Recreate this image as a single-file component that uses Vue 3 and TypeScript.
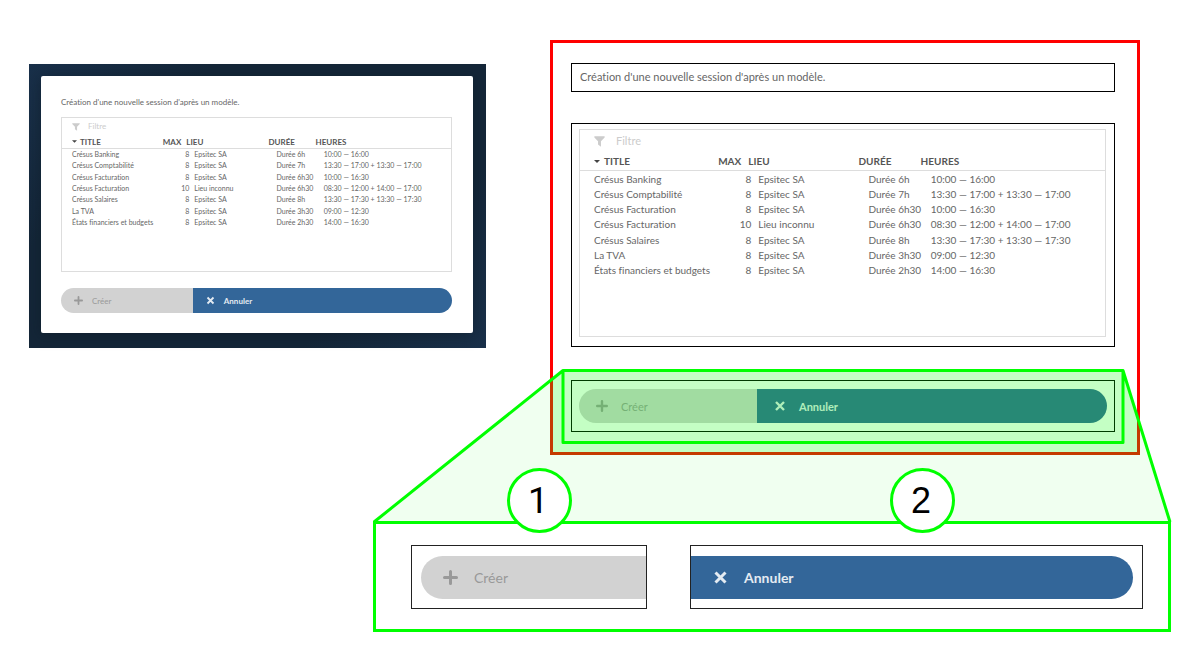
<script setup lang="ts">
interface Session {
  title: string
  max: number
  place: string
  duration: string
  hours: string
}

const variants = ['compact', 'outlined'] as const

const sessions: Session[] = [
  { title: 'Crésus Banking', max: 8, place: 'Epsitec SA', duration: 'Durée 6h', hours: '10:00 — 16:00' },
  { title: 'Crésus Comptabilité', max: 8, place: 'Epsitec SA', duration: 'Durée 7h', hours: '13:30 — 17:00 + 13:30 — 17:00' },
  { title: 'Crésus Facturation', max: 8, place: 'Epsitec SA', duration: 'Durée 6h30', hours: '10:00 — 16:30' },
  { title: 'Crésus Facturation', max: 10, place: 'Lieu inconnu', duration: 'Durée 6h30', hours: '08:30 — 12:00 + 14:00 — 17:00' },
  { title: 'Crésus Salaires', max: 8, place: 'Epsitec SA', duration: 'Durée 8h', hours: '13:30 — 17:30 + 13:30 — 17:30' },
  { title: 'La TVA', max: 8, place: 'Epsitec SA', duration: 'Durée 3h30', hours: '09:00 — 12:30' },
  { title: 'États financiers et budgets', max: 8, place: 'Epsitec SA', duration: 'Durée 2h30', hours: '14:00 — 16:30' },
]

const plusPath = 'M6 1.2V10.8M1.2 6H10.8'
const crossPath = 'M2 2L10 10M10 2L2 10'
</script>

<template>
  <main class="page">
    <div class="dialogs">
      <div v-for="variant in variants" :key="variant" class="stage" :class="variant">
        <div class="dialog">
          <p class="message">Création d'une nouvelle session d'après un modèle.</p>
          <section class="list-area">
            <div class="list">
              <label class="filter">
                <svg class="funnel" viewBox="0 0 12 12" aria-hidden="true">
                  <path d="M0.4 0.4H11.6V1.5L7.6 5.8V11.8L4.4 9.4V5.8L0.4 1.5Z" />
                </svg>
                <input type="text" placeholder="Filtre" aria-label="Filtre" />
              </label>
              <table>
                <thead>
                  <tr>
                    <th class="sorted">
                      <svg class="arrow" viewBox="0 0 6 3" aria-hidden="true"><path d="M0 0H6L3 3Z" /></svg>TITLE
                    </th>
                    <th class="num">MAX</th>
                    <th>LIEU</th>
                    <th>DURÉE</th>
                    <th>HEURES</th>
                  </tr>
                </thead>
                <tbody>
                  <tr v-for="(session, i) in sessions" :key="i">
                    <td>{{ session.title }}</td>
                    <td class="num">{{ session.max }}</td>
                    <td>{{ session.place }}</td>
                    <td>{{ session.duration }}</td>
                    <td>{{ session.hours }}</td>
                  </tr>
                </tbody>
              </table>
            </div>
          </section>
          <section class="actions">
            <button type="button" class="action create" disabled>
              <svg viewBox="0 0 12 12" aria-hidden="true"><path :d="plusPath" /></svg>Créer
            </button>
            <button type="button" class="action cancel">
              <svg viewBox="0 0 12 12" aria-hidden="true"><path :d="crossPath" /></svg>Annuler
            </button>
          </section>
        </div>
      </div>
    </div>

    <div class="detail-row">
      <section class="detail">
        <div class="part part-create">
          <button type="button" class="action create" disabled>
            <svg viewBox="0 0 12 12" aria-hidden="true"><path :d="plusPath" /></svg>Créer
          </button>
        </div>
        <div class="part part-cancel">
          <button type="button" class="action cancel">
            <svg viewBox="0 0 12 12" aria-hidden="true"><path :d="crossPath" /></svg>Annuler
          </button>
        </div>
      </section>
    </div>

    <svg class="callout" viewBox="0 0 1200 669" preserveAspectRatio="none" aria-hidden="true">
      <path class="tint" d="M550 380.5L563 370H1123L1140 424V455H550Z" />
      <path class="tint-light" d="M550 380.5V455H1140V424L1170 522H374Z" />
      <path class="line" d="M374 522L563 370.5H1123L1170 522M563 370V442.5H1123V370" />
    </svg>
    <span class="badge badge-one">1</span>
    <span class="badge badge-two">2</span>
  </main>
</template>

<style>
body {
  margin: 0;
  background: #fff;
}
</style>

<style scoped>
.page {
  position: relative;
  min-width: 900px;
  padding: 40px 0 37px;
  font-family: Lato, "Liberation Sans", sans-serif;
  font-variant-ligatures: none;
  color: #666;
}

.dialogs {
  display: grid;
  grid-template-columns: 457fr 590fr;
  column-gap: calc(100% * 64 / 1111);
  padding: 0 5% 0 calc(100% * 29 / 1200);
  align-items: start;
}

.stage {
  --text: 7px;
  --label: 8px;
  --message: 8px;
  --col-gap: 5px;
  --row-pad: 10px;
  --thead: 79fr 25fr 77fr 42fr 135fr;
  --tbody: 87fr 25fr 77fr 42fr 127fr;
  --filter-height: 17px;
  --head-height: 14px;
  --body-height: 79px;
  --list-height: 155px;
  --funnel: 8px;
  --funnel-gap: 8px;
  --arrow: 5px;
  --arrow-gap: 3px;
  --action-height: 25px;
  --action-pad: 13px;
  --action-icon: 9px;
  --action-gap: 9px;
}

.outlined {
  --text: 10px;
  --label: 10px;
  --message: 11px;
  --col-gap: 7px;
  --row-pad: 14px;
  --thead: 106fr 34fr 103fr 55fr 184fr;
  --tbody: 116fr 34fr 103fr 55fr 174fr;
  --filter-height: 22px;
  --head-height: 19px;
  --body-height: 107px;
  --list-height: 208px;
  --funnel: 11px;
  --funnel-gap: 11px;
  --arrow: 6px;
  --arrow-gap: 4px;
  --action-height: 34px;
  --action-pad: 17px;
  --action-icon: 12px;
  --action-gap: 13px;
}

.compact {
  margin-top: 24px;
  padding: 12px 13px 15px 12px;
  background: linear-gradient(135deg, #19304a 0%, #142638 25%, #142638 75%, #19304a 100%);
}

.compact .dialog {
  padding: 18px 21px 20px 20px;
  border-radius: 2px;
  background: #fff;
  box-shadow: 0 2px 14px rgba(12, 25, 36, 0.5);
}

.outlined {
  padding: 20px 22px 20px 18px;
  border: 3px solid #f00;
}

.message {
  margin: 0;
  font-size: var(--message);
  line-height: 16px;
  white-space: nowrap;
}

.outlined .message {
  padding: 5px 8px 6px;
  border: 1px solid #000;
}

.compact .list-area {
  margin: 7px 0 16px;
}

.outlined .list-area {
  margin: 31px 0 33px;
  padding: 5px 8px 9px 7px;
  border: 1px solid #000;
}

.list {
  box-sizing: border-box;
  min-height: var(--list-height);
  border: 1px solid #ddd;
}

.filter {
  display: flex;
  align-items: center;
  gap: var(--funnel-gap);
  height: var(--filter-height);
  padding: 0 var(--row-pad);
}

.funnel {
  flex: none;
  width: var(--funnel);
  height: var(--funnel);
  fill: #ccc;
}

.filter input {
  flex: 1;
  min-width: 0;
  padding: 0 0 2px;
  border: 0;
  outline: 0;
  background: none;
  color: #666;
  font-family: inherit;
  font-size: var(--message);
}

.filter input::placeholder {
  color: #ccc;
  opacity: 1;
}

table,
thead {
  display: block;
}

tbody {
  display: grid;
  grid-auto-rows: 1fr;
  height: var(--body-height);
}

tr {
  display: grid;
  grid-template-columns: var(--tbody);
  column-gap: var(--col-gap);
  align-items: center;
  padding-left: var(--row-pad);
}

thead tr {
  box-sizing: border-box;
  grid-template-columns: var(--thead);
  height: var(--head-height);
  border-bottom: 1px solid #ddd;
}

th,
td {
  min-width: 0;
  padding: 0;
  font-size: var(--text);
  line-height: 1;
  text-align: left;
  white-space: nowrap;
}

th {
  color: #555;
  font-size: var(--label);
  font-weight: 700;
}

.num {
  text-align: right;
}

.sorted {
  display: flex;
  align-items: center;
  gap: var(--arrow-gap);
}

.arrow {
  width: var(--arrow);
  height: 3px;
  fill: #444;
}

.actions {
  display: grid;
  grid-template-columns: 178fr 350fr;
}

.outlined .actions {
  padding: 8px 7px;
  border: 1px solid #000;
}

.action {
  display: flex;
  align-items: center;
  gap: var(--action-gap);
  width: 100%;
  height: var(--action-height);
  padding: 0 0 0 var(--action-pad);
  border: 0;
  font-family: inherit;
  font-size: var(--message);
}

.action svg {
  flex: none;
  width: var(--action-icon);
  height: var(--action-icon);
  fill: none;
  stroke: currentColor;
  stroke-width: 2.4;
  stroke-linecap: round;
}

.create {
  border-radius: 100px 0 0 100px;
  background: #d2d2d2;
  color: #999;
}

.cancel {
  border-radius: 0 100px 100px 0;
  background: #336699;
  color: #e4ebf2;
  font-weight: 700;
}

.cancel svg {
  stroke-linecap: butt;
}

.detail-row {
  margin-top: 66px;
  padding: 0 calc(100% * 29 / 1200) 0 calc(100% * 373 / 1200);
}

.detail {
  --message: 14px;
  --action-height: 43px;
  --action-pad: 22px;
  --action-icon: 15px;
  --action-gap: 16px;
  display: grid;
  grid-template-columns: 236fr 453fr;
  column-gap: 43px;
  padding: 21px 25px 20px 35px;
  border: 3px solid #0f0;
}

.part {
  padding: 10px 0 9px;
  border: 1px solid #222;
}

.part-create {
  padding-left: 9px;
}

.part-cancel {
  padding-right: 9px;
}

.callout {
  position: absolute;
  top: 0;
  left: 0;
  width: 100%;
  height: 669px;
  pointer-events: none;
}

.tint {
  fill: rgba(0, 255, 0, 0.23);
}

.tint-light {
  fill: rgba(0, 255, 0, 0.06);
}

.line {
  fill: none;
  stroke: #0f0;
  stroke-width: 3;
  stroke-linejoin: round;
  vector-effect: non-scaling-stroke;
}

.badge {
  position: absolute;
  top: 468px;
  display: flex;
  align-items: center;
  justify-content: center;
  box-sizing: border-box;
  width: 65px;
  height: 65px;
  padding-right: 3px;
  border: 3px solid #0f0;
  border-radius: 50%;
  background: #fff;
  color: #000;
  font-family: "Liberation Sans", Arial, sans-serif;
  font-size: 36px;
  line-height: 1;
}

.badge-one {
  left: calc(100% * 507 / 1200);
  font-family: Roboto, Arial, sans-serif;
}

.badge-two {
  left: calc(100% * 890 / 1200);
}
</style>
